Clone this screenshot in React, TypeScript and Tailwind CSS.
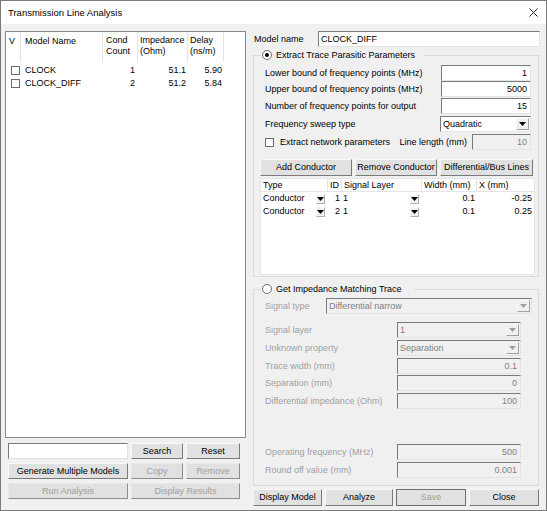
import React from "react";

type Kids = { children?: React.ReactNode };

function Arrow({ disabled }: { disabled?: boolean }) {
  return (
    <svg width="7" height="4" viewBox="0 0 7 4">
      <polygon points="0,0 7,0 3.5,4" fill={disabled ? "#a0a0a0" : "#000"} />
    </svg>
  );
}

function Btn({ children, w, disabled, def }: Kids & { w: string; disabled?: boolean; def?: boolean }) {
  const look = def
    ? "border border-[#6e6e6e] text-[#a0a0a0]"
    : disabled
      ? "border border-[#e8e8e8] border-r-[#8c8c8c] border-b-[#8c8c8c] text-[#a0a0a0]"
      : "border border-[#f8f8f8] border-r-[#7a7a7a] border-b-[#7a7a7a] text-black";
  return <div className={`${w} h-full flex items-center justify-center bg-[#e1e1e1] ${look}`}>{children}</div>;
}

function Field({ value, w, disabled }: { value: string; w: string; disabled?: boolean }) {
  return (
    <div
      className={`${w} h-[16px] flex items-center justify-end px-[3px] border border-[#e3e3e3] border-t-[#7a7a7a] border-l-[#7a7a7a] ${
        disabled ? "bg-[#f0f0f0] text-[#808080]" : "bg-white text-black"
      }`}
    >
      {value}
    </div>
  );
}

function Select({ value, w, disabled }: { value: string; w: string; disabled?: boolean }) {
  return (
    <div
      className={`${w} h-[16px] flex items-center border border-[#e3e3e3] border-t-[#7a7a7a] border-l-[#7a7a7a] ${
        disabled ? "bg-[#f0f0f0] text-[#808080]" : "bg-white text-black"
      }`}
    >
      <span className="flex-1 pl-[2px]">{value}</span>
      <div className="w-[13px] h-[12px] mr-[1px] flex items-center justify-center border border-[#f8f8f8] border-r-[#a0a0a0] border-b-[#a0a0a0] bg-[#f0f0f0]">
        <Arrow disabled={disabled} />
      </div>
    </div>
  );
}

function Check() {
  return <div className="w-[9px] h-[9px] border border-[#6d6d6d] bg-white shrink-0" />;
}

function Radio({ on }: { on?: boolean }) {
  return (
    <div className="w-[10px] h-[10px] rounded-full border border-[#6d6d6d] bg-white flex items-center justify-center shrink-0">
      {on && <div className="w-[4px] h-[4px] rounded-full bg-black" />}
    </div>
  );
}

function Row({ label, children, mt, grey }: Kids & { label: string; mt: string; grey?: boolean }) {
  return (
    <div className={`flex items-center justify-between h-[16px] ${mt}`}>
      <span className={grey ? "text-[#a0a0a0]" : "text-black"}>{label}</span>
      {children}
    </div>
  );
}

const models = [
  { name: "CLOCK", count: "1", imp: "51.1", delay: "5.90" },
  { name: "CLOCK_DIFF", count: "2", imp: "51.2", delay: "5.84" },
];

const conductors = [
  { id: "1", x: "-0.25" },
  { id: "2", x: "0.25" },
];

export default function App() {
  return (
    <div className="w-[547px] h-[511px] flex flex-col bg-[#f0f0f0] border border-[#7a7a7a] font-['Liberation_Sans',Arial,sans-serif] text-[9px] leading-none text-black whitespace-nowrap overflow-hidden">
      <div className="h-[23px] shrink-0 bg-white flex items-center justify-between pl-[7px] pr-[8px]">
        <span className="text-[9.5px]">Transmission Line Analysis</span>
        <svg width="9" height="9" viewBox="0 0 9 9">
          <path d="M0.5 0.5 L8.5 8.5 M8.5 0.5 L0.5 8.5" stroke="#222" strokeWidth="1" />
        </svg>
      </div>

      <div className="flex pt-[7px] pl-[4px]">
        {/* left column */}
        <div className="w-[241px] flex flex-col">
          <div className="h-[407px] bg-white border border-[#828790]">
            <div className="flex h-[30px]">
              <div className="w-[15px] pl-[3px] pt-[5px] border-r border-[#e5e5e5]">V</div>
              <div className="w-[82px] pl-[4px] pt-[5px] border-r border-[#e5e5e5]">Model Name</div>
              <div className="w-[35px] pl-[3px] pt-[3px] border-r border-[#e5e5e5] leading-[11px]">
                Cond
                <br />
                Count
              </div>
              <div className="w-[50px] pl-[2px] pt-[3px] border-r border-[#e5e5e5] leading-[11px]">
                Impedance
                <br />
                (Ohm)
              </div>
              <div className="w-[36px] pl-[2px] pt-[3px] border-r border-[#e5e5e5] leading-[11px]">
                Delay
                <br />
                (ns/m)
              </div>
            </div>
            <div className="pt-[2px]">
              {models.map((m) => (
                <div key={m.name} className="flex h-[13px] items-center">
                  <div className="w-[15px] pl-[5px]">
                    <Check />
                  </div>
                  <div className="w-[82px] pl-[4px]">{m.name}</div>
                  <div className="w-[35px] text-right pr-[3px]">{m.count}</div>
                  <div className="w-[50px] text-right pr-[2px]">{m.imp}</div>
                  <div className="w-[36px] text-right pr-[2px]">{m.delay}</div>
                </div>
              ))}
            </div>
          </div>

          <div className="flex flex-col gap-[4px] mt-[5px] pl-[3px]">
            <div className="flex gap-[3px] h-[16px]">
              <div className="w-[120px] h-full bg-white border border-[#e3e3e3] border-t-[#7a7a7a] border-l-[#7a7a7a]" />
              <Btn w="w-[52px]">Search</Btn>
              <Btn w="w-[54px]">Reset</Btn>
            </div>
            <div className="flex gap-[3px] h-[16px]">
              <Btn w="w-[120px]">Generate Multiple Models</Btn>
              <Btn w="w-[52px]" disabled>
                Copy
              </Btn>
              <Btn w="w-[54px]" disabled>
                Remove
              </Btn>
            </div>
            <div className="flex gap-[3px] h-[16px]">
              <Btn w="w-[120px]" disabled>
                Run Analysis
              </Btn>
              <Btn w="w-[109px]" disabled>
                Display Results
              </Btn>
            </div>
          </div>
        </div>

        {/* right column */}
        <div className="w-[288px] ml-[6px] flex flex-col">
          <div className="flex items-center h-[16px]">
            <span className="w-[66px] pl-[2px]">Model name</span>
            <div className="flex-1 h-[16px] flex items-center px-[2px] bg-white border border-[#e3e3e3] border-t-[#7a7a7a] border-l-[#7a7a7a]">
              CLOCK_DIFF
            </div>
          </div>

          {/* group 1 */}
          <div className="relative mt-[8px] ml-[1px] w-[286px] h-[222px] border border-[#dcdcdc]">
            <div className="absolute -top-[6px] left-[7px] flex items-center gap-[4px] pl-[1px] pr-[8px] bg-[#f0f0f0]">
              <Radio on />
              <span>Extract Trace Parasitic Parameters</span>
            </div>
            <div className="flex flex-col pt-[9px] pl-[6px] pr-[4px]">
              <div className="pl-[5px] pr-[3px] flex flex-col">
                <Row label="Lower bound of frequency points (MHz)" mt="mt-0">
                  <Field w="w-[90px]" value="1" />
                </Row>
                <Row label="Upper bound of frequency points (MHz)" mt="mt-0">
                  <Field w="w-[90px]" value="5000" />
                </Row>
                <Row label="Number of frequency points for output" mt="mt-[1px]">
                  <Field w="w-[90px]" value="15" />
                </Row>
                <Row label="Frequency sweep type" mt="mt-[2px]">
                  <Select w="w-[91px]" value="Quadratic" />
                </Row>
                <div className="flex items-center h-[16px] mt-[2px]">
                  <Check />
                  <span className="ml-[6px]">Extract network parameters</span>
                  <span className="ml-auto mr-[5px]">Line length (mm)</span>
                  <Field w="w-[59px]" value="10" disabled />
                </div>
              </div>
              <div className="flex gap-[3px] h-[17px] mt-[9px]">
                <Btn w="w-[92px]">Add Conductor</Btn>
                <Btn w="w-[82px]">Remove Conductor</Btn>
                <Btn w="w-[93px]">Differential/Bus Lines</Btn>
              </div>
              <div className="mt-[2px] w-[275px] h-[97px] bg-white border border-[#e5e5e5]">
                <div className="flex h-[13px] items-center border-b border-[#e5e5e5]">
                  <div className="w-[67px] pl-[2px] h-full flex items-center border-r border-[#e5e5e5]">Type</div>
                  <div className="w-[14px] pl-[2px] h-full flex items-center border-r border-[#e5e5e5]">ID</div>
                  <div className="w-[80px] pl-[2px] h-full flex items-center border-r border-[#e5e5e5]">Signal Layer</div>
                  <div className="w-[55px] pl-[2px] h-full flex items-center border-r border-[#e5e5e5]">Width (mm)</div>
                  <div className="w-[57px] pl-[2px] h-full flex items-center">X (mm)</div>
                </div>
                {conductors.map((c) => (
                  <div key={c.id} className="flex h-[13px] items-center">
                    <div className="w-[67px] pl-[2px] flex items-center">
                      <span className="flex-1">Conductor</span>
                      <div className="w-[9px] h-[10px] mr-[3px] flex items-center justify-center border border-[#f8f8f8] border-r-[#b0b0b0] border-b-[#b0b0b0] bg-[#f0f0f0]">
                        <Arrow />
                      </div>
                    </div>
                    <div className="w-[14px] text-right pr-[2px]">{c.id}</div>
                    <div className="w-[80px] pl-[1px] flex items-center">
                      <span className="flex-1">1</span>
                      <div className="w-[9px] h-[10px] mr-[3px] flex items-center justify-center border border-[#f8f8f8] border-r-[#b0b0b0] border-b-[#b0b0b0] bg-[#f0f0f0]">
                        <Arrow />
                      </div>
                    </div>
                    <div className="w-[55px] text-right pr-[2px]">0.1</div>
                    <div className="w-[57px] text-right pr-[2px]">{c.x}</div>
                  </div>
                ))}
              </div>
            </div>
          </div>

          {/* group 2 */}
          <div className="relative mt-[12px] ml-[1px] w-[286px] h-[197px] border border-[#dcdcdc]">
            <div className="absolute -top-[6px] left-[7px] flex items-center gap-[4px] pl-[1px] pr-[12px] bg-[#f0f0f0]">
              <Radio />
              <span>Get Impedance Matching Trace</span>
            </div>
            <div className="flex flex-col pt-[8px] pl-[11px] pr-[6px]">
              <Row label="Signal type" mt="mt-0" grey>
                <Select w="w-[206px]" value="Differential narrow" disabled />
              </Row>
              <div className="flex flex-col pr-[11px]">
                <Row label="Signal layer" mt="mt-[8px]" grey>
                  <Select w="w-[124px]" value="1" disabled />
                </Row>
                <Row label="Unknown property" mt="mt-[2px]" grey>
                  <Select w="w-[124px]" value="Separation" disabled />
                </Row>
                <Row label="Trace width (mm)" mt="mt-[2px]" grey>
                  <Field w="w-[124px]" value="0.1" disabled />
                </Row>
                <Row label="Separation (mm)" mt="mt-[1px]" grey>
                  <Field w="w-[124px]" value="0" disabled />
                </Row>
                <Row label="Differential impedance (Ohm)" mt="mt-[2px]" grey>
                  <Field w="w-[124px]" value="100" disabled />
                </Row>
                <Row label="Operating frequency (MHz)" mt="mt-[35px]" grey>
                  <Field w="w-[124px]" value="500" disabled />
                </Row>
                <Row label="Round off value (mm)" mt="mt-[2px]" grey>
                  <Field w="w-[124px]" value="0.001" disabled />
                </Row>
              </div>
            </div>
          </div>

          <div className="flex gap-[3px] h-[17px] mt-[3px] ml-[1px]">
            <Btn w="w-[69px]">Display Model</Btn>
            <Btn w="w-[68px]">Analyze</Btn>
            <Btn w="w-[70px]" def>
              Save
            </Btn>
            <Btn w="w-[70px]">Close</Btn>
          </div>
        </div>
      </div>
    </div>
  );
}
